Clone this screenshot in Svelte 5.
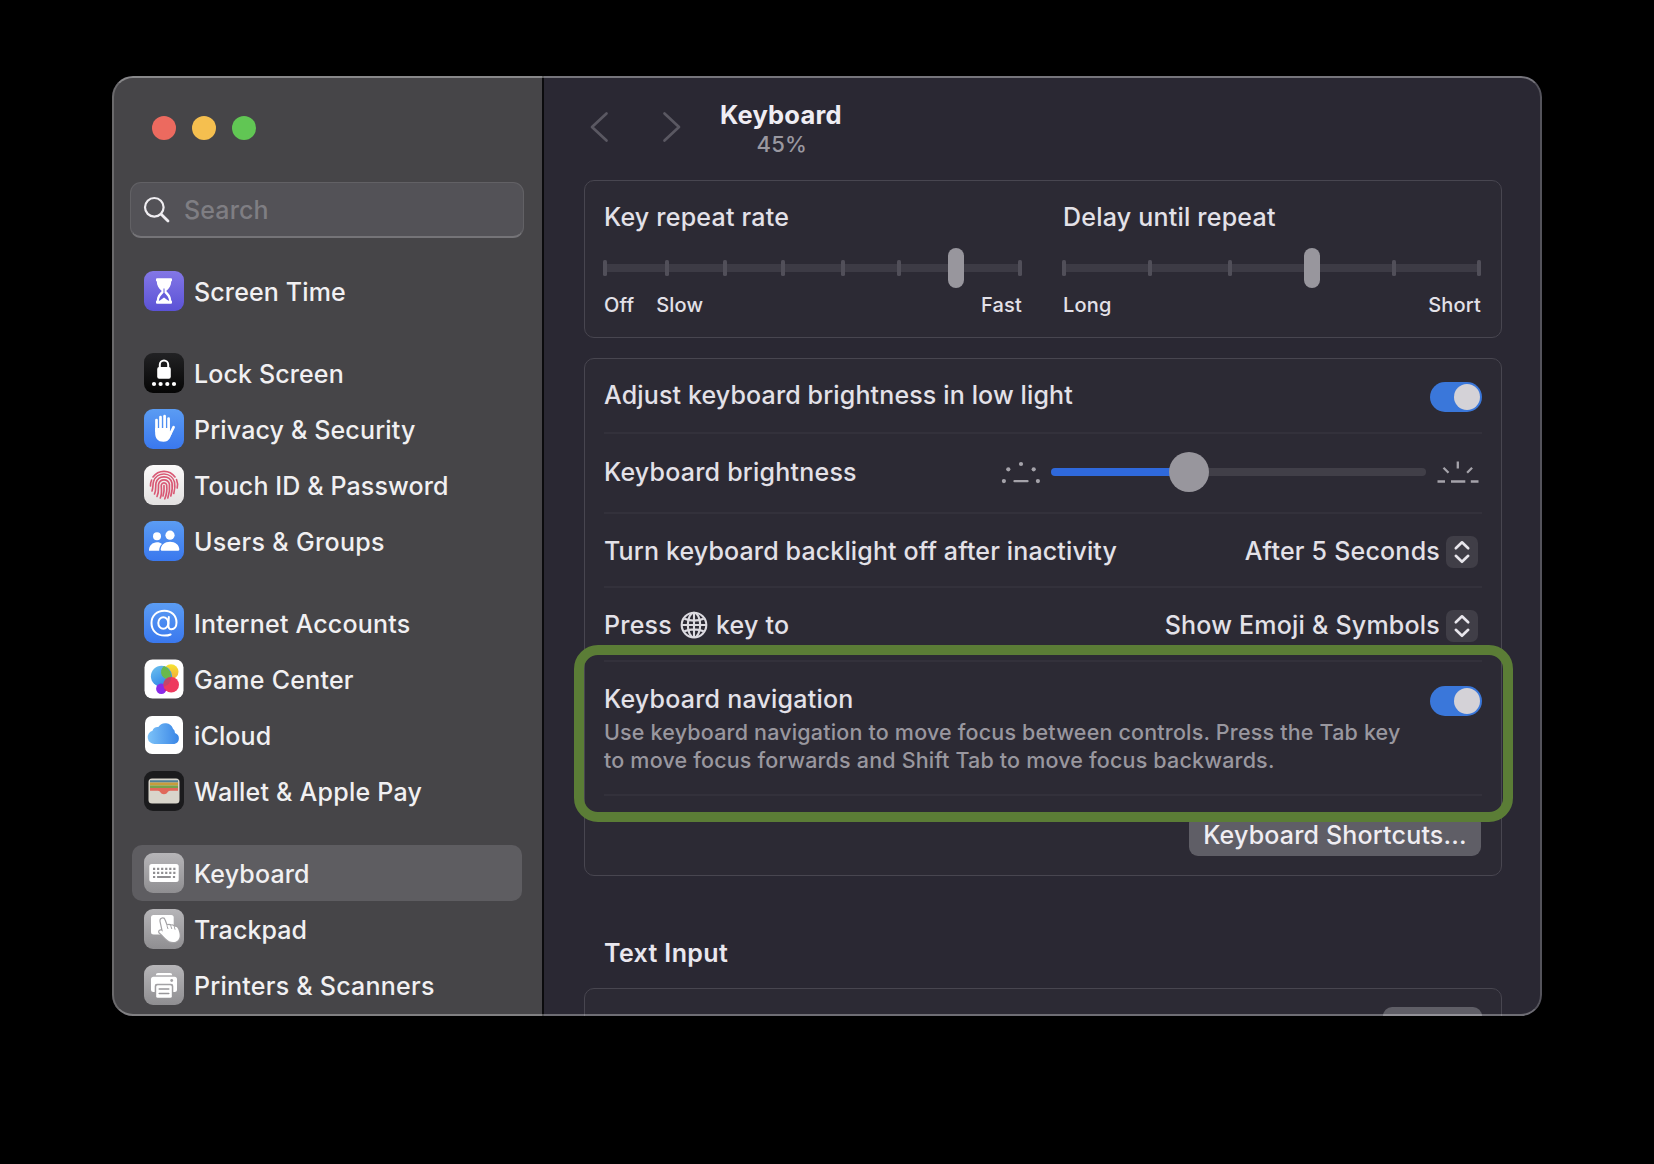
<script>
  const groups = [
    [{ icon: 'time', label: 'Screen Time', ls: 0.14 }],
    [
      { icon: 'lock', label: 'Lock Screen', ls: 0.12 },
      { icon: 'hand', label: 'Privacy & Security', ls: 0.15 },
      { icon: 'touch', label: 'Touch ID & Password', ls: 0.12 },
      { icon: 'users', label: 'Users & Groups', ls: 0.32 }
    ],
    [
      { icon: 'at', label: 'Internet Accounts', ls: 0.2 },
      { icon: 'game', label: 'Game Center', ls: 0.24 },
      { icon: 'cloud', label: 'iCloud', ls: 0.14 },
      { icon: 'wallet', label: 'Wallet & Apple Pay', ls: 0.24 }
    ],
    [
      { icon: 'keyboard', label: 'Keyboard', ls: 0.14, selected: true },
      { icon: 'trackpad', label: 'Trackpad', ls: 0.08 },
      { icon: 'printer', label: 'Printers & Scanners', ls: 0.24 }
    ]
  ];

  // Tick and thumb centres, in pixels along the track.
  const repeatTicks = [0, 62, 120, 178, 238, 294, 415];
  const delayTicks = [0, 86, 166, 330, 415];
</script>

{#snippet appIcon(name)}
  <svg class="app-icon" viewBox="0 0 40 40">
    <defs>
      <linearGradient id="g-purple" x1="0" y1="0" x2="0" y2="1"><stop offset="0" stop-color="#8377e6" /><stop offset="1" stop-color="#5b52d6" /></linearGradient>
      <linearGradient id="g-blue" x1="0" y1="0" x2="0" y2="1"><stop offset="0" stop-color="#5b9cf3" /><stop offset="1" stop-color="#3a78ee" /></linearGradient>
      <linearGradient id="g-grey" x1="0" y1="0" x2="0" y2="1"><stop offset="0" stop-color="#b6b5b8" /><stop offset="1" stop-color="#8f8e91" /></linearGradient>
      <linearGradient id="g-black" x1="0" y1="0" x2="0" y2="1"><stop offset="0" stop-color="#222224" /><stop offset="1" stop-color="#050505" /></linearGradient>
      <linearGradient id="g-white" x1="0" y1="0" x2="0" y2="1"><stop offset="0" stop-color="#fbfafa" /><stop offset="1" stop-color="#e2e0e0" /></linearGradient>
      <linearGradient id="g-cloud" x1="0" y1="0" x2="1" y2="0"><stop offset="0" stop-color="#7cc2f8" /><stop offset="1" stop-color="#3a86e6" /></linearGradient>
      <linearGradient id="g-bubble" x1="0" y1="0" x2="0.6" y2="1"><stop offset="0" stop-color="#6fc3ee" /><stop offset="1" stop-color="#2f86e8" /></linearGradient>
      <linearGradient id="g-yellow" x1="0" y1="0" x2="0" y2="1"><stop offset="0" stop-color="#f6e532" /><stop offset="1" stop-color="#f3a93a" /></linearGradient>
    </defs>
    {#if name === 'time'}
      <rect width="40" height="40" rx="9" fill="url(#g-purple)" />
      <path d="M12 8.2 q0-1 1-1 h14 q1 0 1 1 v1.3 q0 .8-.8 .9 c0 4.200-1.900 6.500-5 9.600 c3.100 3.100 5 5.300 5 9.600 q.8 .1 .8 .9 v1.300 q0 1-1 1 H13 q-1 0-1-1 v-1.300 q0-.8 .8-.9 c0-4.300 1.900-6.500 5-9.600 c-3.100-3.100-5-5.400-5-9.600 q-.8-.1-.8-.9z" fill="#fff" />
      <path d="M14.800 29.900 c.2-3.200 2.200-5.700 4.700-8.200 v-4.200 h1 v4.200 c2.500 2.500 4.500 5 4.700 8.200 q-2-.9-5.200-3.500 q-3.200 2.600-5.200 3.500z" fill="#665cdb" />
    {:else if name === 'lock'}
      <rect width="40" height="40" rx="9" fill="url(#g-black)" />
      <path d="M15.800 15 v-3.200 a4.200 4.200 0 0 1 8.400 0 V15" fill="none" stroke="#fff" stroke-width="2" />
      <rect x="13.200" y="14" width="13.600" height="11.800" rx="2" fill="#fff" />
      <g fill="#fff"><circle cx="10" cy="31" r="2.100" /><circle cx="16.600" cy="31" r="2.100" /><circle cx="23.300" cy="31" r="2.100" /><circle cx="30" cy="31" r="2.100" /></g>
    {:else if name === 'hand'}
      <rect width="40" height="40" rx="9" fill="url(#g-blue)" />
      <g fill="none" stroke="#fff" stroke-width="2.700" stroke-linecap="round">
        <path d="M12.500 22 V11" /><path d="M16.500 20 V8" /><path d="M20.600 20 V7.200" /><path d="M24.600 20 V9.600" /><path d="M26.300 25 L29.600 18.200" />
      </g>
      <path d="M11.150 19 H25.950 V22.500 L28.500 21.500 C27 27.500 25.500 32.800 19.500 32.800 C13.500 32.800 11.150 29 11.150 24z" fill="#fff" />
    {:else if name === 'touch'}
      <rect width="40" height="40" rx="9" fill="url(#g-white)" />
      <g fill="none" stroke="#d95874" stroke-width="1.650" stroke-linecap="round">
        <path d="M9 12 A13.500 13.500 0 0 1 31 12" />
        <path d="M6.500 21 A13.500 13.500 0 0 1 7.600 15 M32.500 14.500 A14 14 0 0 1 33.200 23" />
        <path d="M8 26 C9.500 22 8.500 20 9.500 16.500 A11 11 0 0 1 30.500 17 C31.300 21 30.800 25 29.800 28.500" />
        <path d="M10.500 29 C12.500 24 11.300 21.500 12 18 A8.300 8.300 0 0 1 28 18 C28.800 23 28 27 26.800 31" />
        <path d="M13 31.500 C15.500 26 14 22 14.600 19 A5.600 5.600 0 0 1 25.400 19 C26 24 25.300 28.500 23.800 33" />
        <path d="M16.300 33 C18.500 28 17 22.500 17.300 20 A2.800 2.800 0 0 1 22.700 20 C23.200 25 22.400 30 20.800 33.800" />
        <path d="M20 20.500 C20.400 25 20 28 19 31" />
      </g>
    {:else if name === 'users'}
      <rect width="40" height="40" rx="9" fill="url(#g-blue)" />
      <g fill="#fff">
        <circle cx="13" cy="15.300" r="4" />
        <path d="M5 29.800 C4.800 24.800 8.500 21.300 13 21.300 C15 21.300 16.700 21.900 18 22.900 C16.200 24.600 15.200 26.800 15.200 29.800z" />
        <circle cx="26" cy="14.200" r="4.600" />
        <path d="M16.700 28.600 C16.700 24 20.800 20.800 26 20.800 C31.200 20.800 35.300 24 35.300 28.600 Q35.300 29.800 34.100 29.800 H17.900 Q16.700 29.800 16.700 28.600z" />
      </g>
    {:else if name === 'at'}
      <rect width="40" height="40" rx="9" fill="url(#g-blue)" />
      <g fill="none" stroke="#fff" stroke-width="2" stroke-linecap="round">
        <ellipse cx="19.300" cy="20" rx="5" ry="5.800" />
        <path d="M24.800 14 L24.400 22.500 C24.300 25 25.500 26.200 27.500 26.200 C30.500 26.200 32.500 23.500 32.500 19.500 C32.500 12.500 27.500 7.700 20.500 7.700 C12.800 7.700 7.500 12.800 7.500 20 C7.500 27.500 12.800 32.600 20.500 32.600 C23 32.600 25 32.200 26.600 31.500" />
      </g>
    {:else if name === 'game'}
      <rect x=".5" y=".5" width="39" height="39" rx="8" fill="#fff" />
      <circle cx="27" cy="12.700" r="7.500" fill="url(#g-yellow)" />
      <circle cx="17.500" cy="17.300" r="10.600" fill="url(#g-bubble)" />
      <path d="M20 7 A10.600 10.600 0 0 1 26.500 20.200 A7.500 7.500 0 0 1 20 7z" fill="#69b94c" />
      <circle cx="17.300" cy="29.800" r="5.200" fill="#8a2be8" />
      <circle cx="27.200" cy="25.700" r="7.800" fill="#ee3a5e" />
      <path d="M19.500 24.500 A7.800 7.800 0 0 1 27.200 18 Q27 25 20.500 27.600 A7.800 7.800 0 0 1 19.500 24.500z" fill="#b8486e" opacity=".75" />
      <path d="M20.500 29.500 Q22.500 30.500 21.500 32.600 Q19.800 31.500 20.500 29.500z" fill="#d3188c" />
    {:else if name === 'cloud'}
      <rect x="1" y="1" width="38" height="38" rx="7" fill="#fff" />
      <path d="M10.500 29 A6.800 6.800 0 0 1 8.500 15.700 A5 5 0 0 1 14.300 12 A8.200 8.200 0 0 1 29 13.800 A5.500 5.500 0 0 1 31 18 A5.700 5.700 0 0 1 30.300 29z" fill="url(#g-cloud)" />
    {:else if name === 'wallet'}
      <rect width="40" height="40" rx="9" fill="#1b1b1d" />
      <rect x="4.500" y="7.500" width="31" height="25" rx="3.500" fill="#d9d5cb" />
      <path d="M6 9.200 H34 V11.500 H6z" fill="#4f8096" />
      <path d="M6 11.500 H34 V14.400 H6z" fill="#c79d3c" />
      <path d="M6 14.400 H34 V16.900 H6z" fill="#76a24a" />
      <path d="M6 16.900 H34 V19.800 H26 C23.600 19.800 23.500 23.300 20 23.300 C16.500 23.300 16.400 19.800 14 19.800 H6z" fill="#e0685a" />
    {:else if name === 'keyboard'}
      <rect width="40" height="40" rx="9" fill="url(#g-grey)" />
      <rect x="5.300" y="11" width="29.400" height="18" rx="2.500" fill="#fff" />
      <g fill="none" stroke="#8f8e91" stroke-width="2.200">
        <path d="M9 15.800 H32" stroke-dasharray="2.200 1.850" /><path d="M9 19.900 H32" stroke-dasharray="2.200 1.850" />
        <path d="M9 24 H11.200 M13.100 24 H26.800 M28.900 24 H31.100" />
      </g>
    {:else if name === 'trackpad'}
      <rect width="40" height="40" rx="9" fill="url(#g-grey)" />
      <rect x="7" y="6" width="22.700" height="19.500" rx="2.500" fill="#fff" />
      <path class="outlined" d="M18.900 22.800 L16.600 12.200 C16.200 9.300 19.800 8.600 20.600 11.200 L22.800 17 C24.300 15.300 25.900 15.800 26.600 17 C28.300 15.900 29.600 16.700 30.200 18 C31.900 17.300 33.400 18.200 34 19.800 C35.800 24 36.700 28.500 34 31.200 C30.500 34.500 25 33.200 22 29.800 C19.500 27 17.500 25.300 15.500 23.500 C14.500 21.800 17 20.500 18.900 22.800z" fill="#fff" stroke="#a3a2a5" stroke-width="2.400" />
      <path d="M23.200 17.500 L23.900 19.600 M27 17.500 L27.700 19.600 M30.500 18.500 L31 20.300" stroke="#a3a2a5" stroke-width="1" stroke-linecap="round" />
    {:else}
      <rect width="40" height="40" rx="9" fill="url(#g-grey)" />
      <path d="M11.800 10.200 Q11.800 8 14 8 H26 Q28.200 8 28.200 10.200z" fill="#fff" />
      <path d="M9.500 11.800 H30.500 Q33 11.800 33 14.300 V24.500 Q33 27 30.500 27 H29.300 V21 Q29.300 18.800 27.100 18.800 H12.900 Q10.700 18.800 10.700 21 V27 H9.500 Q7 27 7 24.500 V14.300 Q7 11.800 9.500 11.800z" fill="#fff" />
      <circle cx="27.700" cy="15.500" r="1.400" fill="#a3a2a5" />
      <rect x="12.200" y="20.200" width="15.600" height="12.600" rx="1.500" fill="#fff" />
      <path d="M15.200 24 H24.800 M15.200 28.400 H24.800" stroke="#98979a" stroke-width="1.500" stroke-linecap="round" />
    {/if}
  </svg>
{/snippet}

{#snippet stepper()}
  <svg class="stepper" viewBox="0 0 32 32">
    <rect width="32" height="32" rx="7" fill="#403e47" />
    <path d="M9.800 12.300 L16 6.300 L22.200 12.300 M9.800 19.800 L16 25.800 L22.200 19.800" fill="none" stroke="#e8e6ec" stroke-width="2.600" stroke-linecap="round" stroke-linejoin="round" />
  </svg>
{/snippet}

{#snippet tickSlider(ticks, thumb)}
  <svg class="ticks" viewBox="0 0 420 40">
    <rect x="2" y="16" width="415" height="8" fill="#3d3b45" />
    {#each ticks as t}
      <rect x={t} y="12" width="4" height="16" rx="1.500" fill="#514f59" />
    {/each}
    <rect x={thumb - 6} y="0" width="16" height="40" rx="8" fill="#98969d" />
  </svg>
{/snippet}

<div class="desktop">
  <div class="window">
    <aside>
      <div class="lights"><i class="red"></i><i class="yellow"></i><i class="green"></i></div>
      <div class="search">
        <svg viewBox="0 0 28 28"><circle cx="11.300" cy="11.300" r="9.300" fill="none" stroke="#efedf1" stroke-width="2.200" /><path d="M18.200 18.200 L25 25" stroke="#efedf1" stroke-width="2.800" stroke-linecap="round" /></svg>
        <span>Search</span>
      </div>
      <nav>
        {#each groups as group}
          <ul>
            {#each group as item}
              <li class:selected={item.selected}>
                {@render appIcon(item.icon)}
                <span style:letter-spacing="{item.ls}px">{item.label}</span>
              </li>
            {/each}
          </ul>
        {/each}
      </nav>
    </aside>

    <main>
      <header>
        <svg class="chevrons" viewBox="0 0 92 32">
          <path d="M17.500 2.500 L3 16 L17.500 29.500 M75.500 2.500 L90 16 L75.500 29.500" fill="none" stroke="#5a5862" stroke-width="2.700" stroke-linecap="round" stroke-linejoin="round" />
        </svg>
        <div class="title">
          <h1>Keyboard</h1>
          <p>45%</p>
        </div>
      </header>

      <section class="card sliders">
        <div class="slider">
          <span class="text">Key repeat rate</span>
          {@render tickSlider(repeatTicks, 351)}
          <div class="ends"><span>Off</span><span class="slow">Slow</span><span class="last">Fast</span></div>
        </div>
        <div class="slider">
          <span class="text">Delay until repeat</span>
          {@render tickSlider(delayTicks, 248)}
          <div class="ends"><span>Long</span><span class="last">Short</span></div>
        </div>
      </section>

      <section class="card settings">
        <div class="row low-light">
          <span class="text tight">Adjust keyboard brightness in low light</span>
          <i class="toggle"></i>
        </div>
        <div class="row brightness">
          <span class="text">Keyboard brightness</span>
          <svg class="glow" viewBox="0 0 40 24">
            <g fill="#a5a3aa"><circle cx="20" cy="4" r="2.100" /><circle cx="7.300" cy="9.300" r="2.100" /><circle cx="32.700" cy="9.300" r="2.100" /><circle cx="2.900" cy="21.100" r="2.100" /><circle cx="36.900" cy="21.100" r="2.100" /><rect x="12.400" y="19.900" width="15.200" height="2.400" rx="1" /></g>
          </svg>
          <div class="level"><i class="knob"></i></div>
          <svg class="glow bright" viewBox="0 0 42 24">
            <path d="M20.800 1.500 V8.500 M6.500 7.800 L11.500 12.700 M35.100 7.800 L30.100 12.700 M.5 21.500 H8 M14 21.500 H28.300 M33.800 21.500 H41.500" stroke="#a5a3aa" stroke-width="2.300" />
          </svg>
        </div>
        <div class="row backlight">
          <span class="text tight">Turn keyboard backlight off after inactivity</span>
          <span class="text value">After 5 Seconds</span>
          {@render stepper()}
        </div>
        <div class="row globe-row">
          <span class="text press">Press
            <svg viewBox="0 0 28 28"><g fill="none" stroke="#dddbe1" stroke-width="2.100"><circle cx="14" cy="14" r="12.300" /><ellipse cx="14" cy="14" rx="6.200" ry="12.300" /><path d="M14 2 V26 M2 14 H26 M4.300 7.800 Q14 11.500 23.700 7.800 M4.300 20.200 Q14 16.500 23.700 20.200" /></g></svg>
            key to</span>
          <span class="text value">Show Emoji &amp; Symbols</span>
          {@render stepper()}
        </div>
        <div class="row nav-row">
          <div class="about">
            <span class="text">Keyboard navigation</span>
            <p>Use keyboard navigation to move focus between controls. Press the Tab key<br />to move focus forwards and Shift Tab to move focus backwards.</p>
          </div>
          <i class="toggle"></i>
          <div class="highlight"></div>
        </div>
        <div class="row buttons">
          <button>Keyboard Shortcuts...</button>
        </div>
      </section>

      <h2>Text Input</h2>
      <section class="card input"><div class="edit"></div></section>
    </main>
  </div>
</div>

<style>
  :global(body) { background: #000; }
  .desktop {
    box-sizing: border-box;
    width: 1654px;
    height: 1164px;
    padding: 76px 112px 0;
    background: #000;
    overflow: hidden;
    font-family: Inter, 'Liberation Sans', sans-serif;
    font-size: 25px;
    font-weight: 450;
    color: #e3e1e8;
  }
  .window {
    position: relative;
    display: flex;
    width: 1430px;
    height: 940px;
    border-radius: 21px;
    overflow: hidden;
    background: #2a2833;
  }
  .window::after {
    content: '';
    position: absolute;
    inset: 0;
    border: 2px solid rgba(255, 255, 255, 0.2);
    border-top-color: rgba(255, 255, 255, 0.36);
    border-bottom-color: rgba(255, 255, 255, 0.32);
    border-radius: 21px;
    pointer-events: none;
  }
  aside {
    flex: none;
    box-sizing: border-box;
    width: 432px;
    padding: 0 20px 0 18px;
    background: #464548;
    border-right: 2px solid #0b0b0d;
  }
  .lights { display: flex; gap: 16px; padding: 40px 0 0 22px; height: 24px; }
  .lights i { width: 24px; height: 24px; border-radius: 50%; }
  .red { background: #ec6a5f; }
  .yellow { background: #f5bf4f; }
  .green { background: #61c654; }
  .search {
    display: flex;
    align-items: center;
    box-sizing: border-box;
    width: 394px;
    height: 56px;
    margin-top: 42px;
    padding-left: 12px;
    border: 1px solid #626165;
    border-bottom: 2px solid #757478;
    border-radius: 11px;
    background: #535257;
    color: #7f7e83;
    letter-spacing: 0.12px;
  }
  .search svg { width: 28px; height: 28px; margin-right: 13px; }
  .search span { padding-top: 1px; }
  nav { padding-top: 25px; }
  ul { list-style: none; margin: 0 0 26px; padding: 0; }
  li {
    display: flex;
    align-items: center;
    gap: 10px;
    box-sizing: border-box;
    width: 390px;
    height: 56px;
    margin-left: 2px;
    padding-left: 12px;
    border-radius: 10px;
    color: #f1f0f2;
    white-space: nowrap;
  }
  li span { padding-top: 1px; }
  .selected { background: #5e5d61; }
  .app-icon { width: 40px; height: 40px; flex: none; }
  .outlined { paint-order: stroke; }

  main { flex: 1; padding: 0 40px; }
  header { display: flex; height: 104px; }
  .chevrons { width: 92px; height: 32px; margin: 35px 0 0 5px; }
  .title { margin: 22px 0 0 39px; text-align: center; }
  h1 { margin: 0; font-size: 25.500px; line-height: 34px; font-weight: 750; letter-spacing: 0.2px; color: #efedf3; }
  .title p { margin: -1px 0 0 2px; font-size: 22px; line-height: 26px; letter-spacing: 0.300px; color: #9a98a0; }
  .card {
    box-sizing: border-box;
    width: 918px;
    border: 1.500px solid #484650;
    border-radius: 10px;
    background: #2c2a34;
  }
  .text { letter-spacing: 0.22px; white-space: nowrap; }
  .tight { letter-spacing: 0.14px; }
  .sliders { display: flex; height: 158px; padding-left: 19px; }
  .slider { width: 420px; margin-right: 39px; padding-top: 20px; }
  .slider .text { display: block; line-height: 32px; }
  .slider + .slider { margin: 0; }
  .ticks { display: block; width: 420px; height: 40px; margin: 15px 0 5px -1px; }
  .ends { display: flex; width: 418px; font-size: 20px; line-height: 24px; letter-spacing: 0.18px; }
  .slow { margin-left: 22px; }
  .last { margin-left: auto; }

  .settings { height: 518px; margin-top: 20px; padding: 0 19px; }
  .row { position: relative; box-sizing: border-box; display: flex; align-items: center; border-bottom: 2px solid #33313b; }
  .low-light { height: 75px; }
  .low-light .toggle { margin-top: 2px; }
  .brightness { height: 80px; padding-bottom: 3px; }
  .low-light .text { padding-bottom: 1px; }
  .backlight { height: 74px; padding-top: 2px; }
  .globe-row { height: 74px; padding-top: 2px; }
  .globe-row .text { margin-top: -1px; }
  .nav-row { height: 134px; align-items: flex-start; padding-top: 21px; }
  .toggle { flex: none; box-sizing: border-box; width: 52px; height: 30px; margin-left: auto; padding: 2px; border-radius: 15px; background: #3a77da; }
  .toggle::after { content: ''; display: block; width: 26px; height: 26px; margin-left: auto; border-radius: 50%; background: #d4d2d7; }
  .glow { width: 40px; height: 24px; flex: none; margin-left: auto; }
  .level { display: flex; align-items: center; width: 375px; height: 8px; margin: 0 11px 0 10px; border-radius: 4px; background: linear-gradient(to right, #2f69dc 138px, #413f48 138px); }
  .knob { width: 40px; height: 40px; flex: none; margin-left: 118px; border-radius: 50%; background: #98969d; }
  .glow.bright { width: 42px; margin: 0 3px 0 0; }
  .value { margin-left: auto; }
  .stepper { width: 32px; height: 32px; margin: 2px 4px 0 6px; flex: none; }
  .press { display: flex; align-items: center; gap: 8px; }
  .press svg { width: 28px; height: 28px; }
  .about .text { display: block; line-height: 32px; }
  .about p { margin: 3px 0 0; font-size: 21.500px; line-height: 28px; letter-spacing: 0.18px; color: #99979f; white-space: nowrap; }
  .nav-row .toggle { margin-top: 3px; }
  /* Callout ring drawn over the surrounding rows. */
  .highlight {
    position: absolute;
    box-sizing: border-box;
    left: -30px;
    top: -17px;
    width: 939px;
    height: 177px;
    border: 10px solid #5b7d36;
    border-radius: 24px;
    z-index: 1;
  }
  .buttons { height: 79px; justify-content: flex-end; border: 0; }
  button {
    box-sizing: border-box;
    width: 292px;
    height: 42px;
    margin: 0 1px 2px 0;
    padding: 0;
    border: 0;
    border-radius: 9px;
    background: #5f5e66;
    color: #efedf2;
    font: inherit;
    letter-spacing: 0.18px;
  }
  h2 { margin: 60px 0 0 20px; font-size: 25px; line-height: 34px; font-weight: 640; letter-spacing: 0.36px; color: #e9e7ee; }
  .input { height: 90px; margin-top: 18px; padding: 18px 19px 0 0; }
  .edit { width: 99px; height: 42px; margin-left: auto; border-radius: 9px; background: #5f5e66; }
</style>
